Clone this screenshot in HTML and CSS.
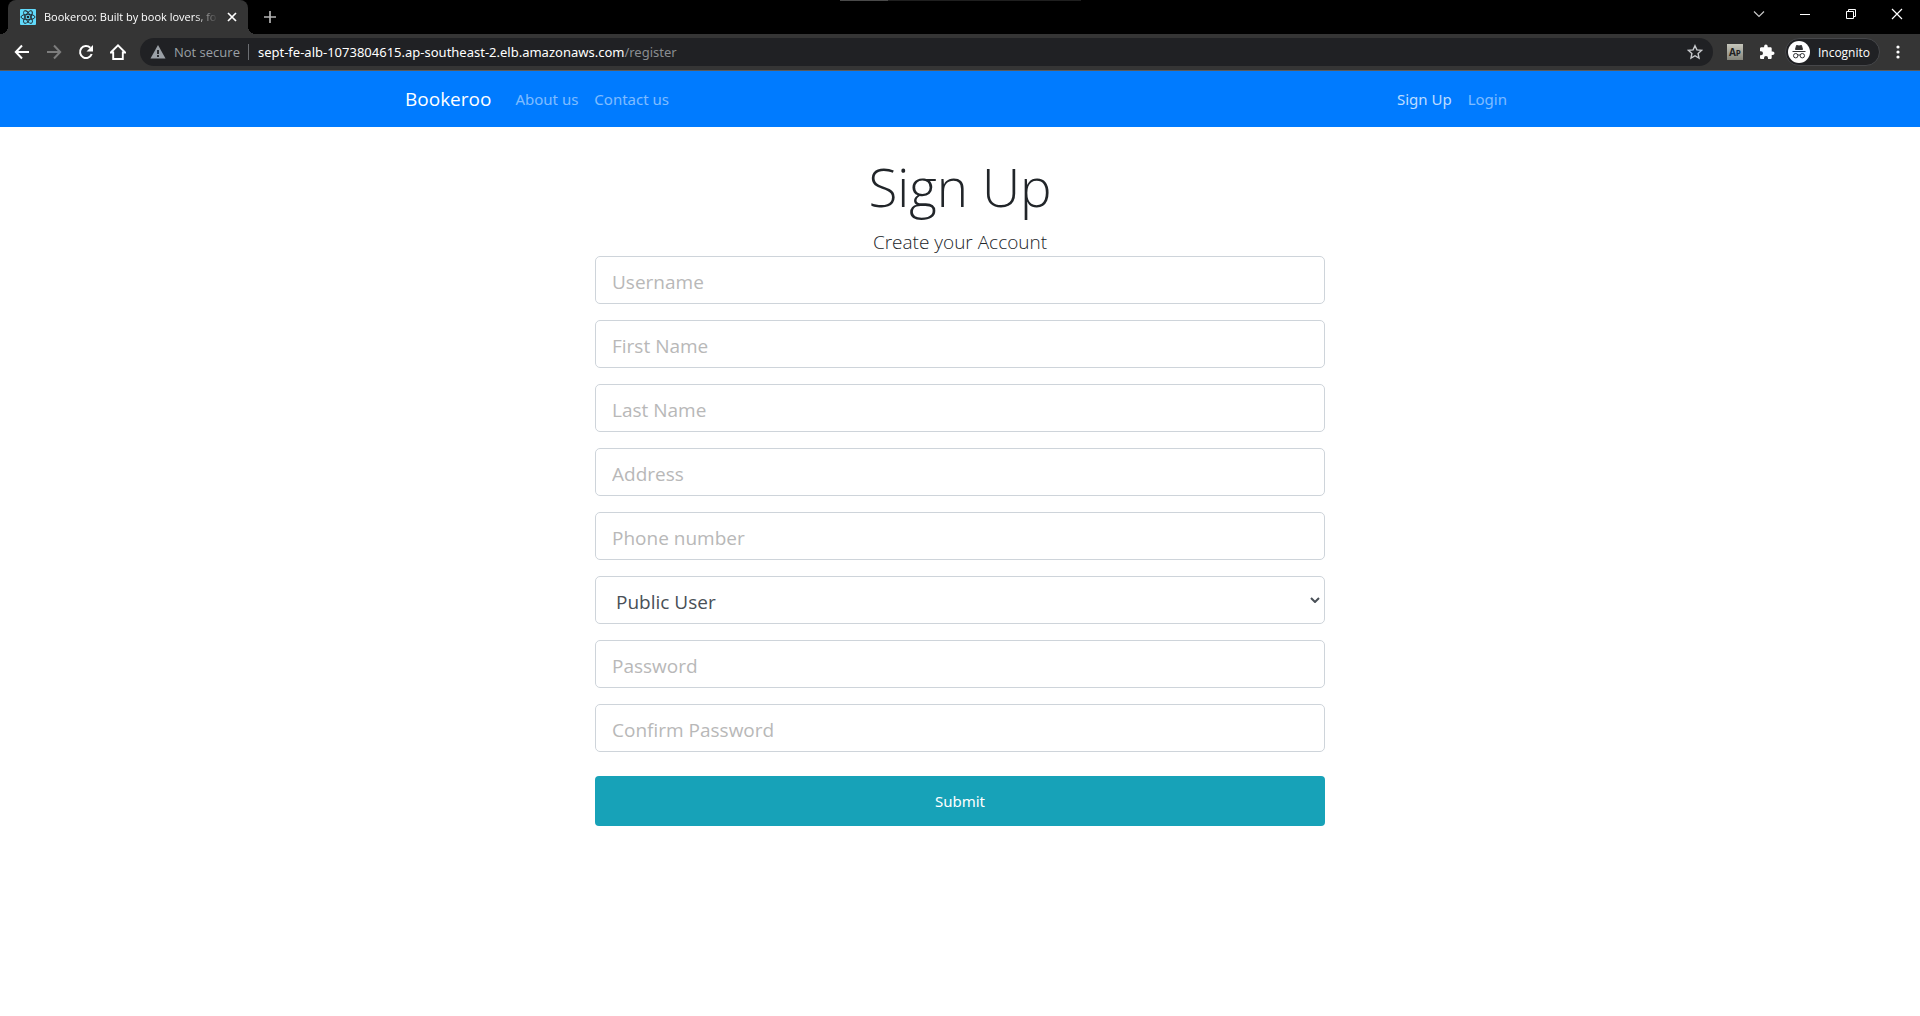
FILE: index.html
```html
<!DOCTYPE html>
<html lang="en">
<head>
<meta charset="utf-8">
<meta name="viewport" content="width=device-width, initial-scale=1">
<title>Bookeroo: Built by book lovers, for book lovers</title>
<link rel="stylesheet" href="styles.css">
</head>
<body>
<div class="browser">
  <div class="tabstrip">
    <div class="tab">
      <svg class="favicon" width="16" height="16" viewBox="0 0 16 16" aria-hidden="true">
        <rect width="16" height="16" rx="1" fill="#61dafb"/>
        <g fill="none" stroke="#20232a" stroke-width="0.9">
          <ellipse cx="8" cy="8" rx="7" ry="2.7"/>
          <ellipse cx="8" cy="8" rx="7" ry="2.7" transform="rotate(60 8 8)"/>
          <ellipse cx="8" cy="8" rx="7" ry="2.7" transform="rotate(120 8 8)"/>
        </g>
        <circle cx="8" cy="8" r="1.3" fill="#20232a"/>
      </svg>
      <span class="tab-title">Bookeroo: Built by book lovers, fo</span>
      <button class="icon-btn" aria-label="Close tab"><svg width="12" height="12" viewBox="0 0 12 12"><path d="M2 2l8 8M10 2l-8 8" stroke="#fff" stroke-width="1.7"/></svg></button>
    </div>
    <button class="icon-btn new-tab" aria-label="New tab"><svg width="12" height="12" viewBox="0 0 12 12"><path d="M6 0v12M0 6h12" stroke="#b4b4b4" stroke-width="1.7"/></svg></button>
    <div class="load-mark"></div>
    <div class="window-controls">
      <button class="icon-btn" aria-label="Search tabs"><svg width="12" height="12" viewBox="0 0 12 12"><path d="M1 3.500l5 5 5-5" fill="none" stroke="#c8c8c8" stroke-width="1.200"/></svg></button>
      <button class="icon-btn" aria-label="Minimize"><svg width="12" height="12" viewBox="0 0 12 12"><path d="M1 6.500h10" stroke="#fff"/></svg></button>
      <button class="icon-btn" aria-label="Restore"><svg width="12" height="12" viewBox="0 0 12 12"><path d="M1.500 3.500h7v7h-7zM3.500 3.500v-2h7v7h-2" fill="none" stroke="#fff"/></svg></button>
      <button class="icon-btn" aria-label="Close"><svg width="12" height="12" viewBox="0 0 12 12"><path d="M1 1l10 10M11 1L1 11" stroke="#fff" stroke-width="1.200"/></svg></button>
    </div>
  </div>
  <div class="toolbar">
    <div class="history">
      <button class="icon-btn" aria-label="Back"><svg width="16" height="16" viewBox="0 0 16 16"><path d="M15 8H2M8 1.500L1.800 8 8 14.500" fill="none" stroke="#fff" stroke-width="2"/></svg></button>
      <button class="icon-btn" aria-label="Forward" disabled><svg width="16" height="16" viewBox="0 0 16 16"><path d="M1 8h13M8 1.500L14.200 8 8 14.500" fill="none" stroke="#7d7d7d" stroke-width="2"/></svg></button>
      <button class="icon-btn" aria-label="Reload"><svg width="16" height="16" viewBox="0 0 16 16"><path d="M13.700 10A6 6 0 1 1 12.300 3.800" fill="none" stroke="#fff" stroke-width="2"/><path d="M15 1v6.500H8.500z" fill="#fff"/></svg></button>
      <button class="icon-btn" aria-label="Home"><svg width="16" height="16" viewBox="0 0 16 16"><path d="M.8 8.500L8 1.400l7.200 7.100H12.800V15H3.200V8.500z" fill="none" stroke="#fff" stroke-width="1.900"/></svg></button>
    </div>
    <div class="omnibox">
      <svg width="16" height="14" viewBox="0 0 16 14" aria-hidden="true"><path d="M8 0l7.500 13.500H.5z" fill="#9aa0a6"/><path d="M8 5v4M8 10v2" stroke="#202124" stroke-width="1.800"/></svg>
      <span class="security">Not secure</span>
      <span class="url"><span class="host">sept-fe-alb-1073804615.ap-southeast-2.elb.amazonaws.com</span>/register</span>
      <button class="icon-btn" aria-label="Bookmark this tab"><svg width="16" height="16" viewBox="0 0 16 16"><path d="M8 1.700l1.900 4.200 4.600.5-3.400 3.100.9 4.500L8 11.700 4 14l.9-4.500-3.400-3.100 4.600-.5z" fill="none" stroke="#c8cacd" stroke-width="1.400"/></svg></button>
    </div>
    <button class="ap-badge" aria-label="AP extension">A<small>P</small></button>
    <button class="icon-btn" aria-label="Extensions"><svg width="16" height="16" viewBox="0 0 16 16"><path d="M13.700 7.400h-1V4.600c0-.8-.6-1.300-1.300-1.300H8.700V2.400a1.800 1.800 0 0 0-3.600 0v.9H2.400C1.600 3.300 1 3.900 1 4.600v2.600h1a2 2 0 0 1 0 4H1v2.600c0 .7.600 1.300 1.400 1.300H5v-1a2 2 0 0 1 4 0v1h2.400c.7 0 1.300-.6 1.300-1.300V11h1a1.800 1.800 0 0 0 0-3.600z" fill="#fff"/></svg></button>
    <button class="incognito"><svg width="22" height="22" viewBox="0 0 22 22" aria-hidden="true"><circle cx="11" cy="11" r="11" fill="#fff"/><path d="M7.500 8.500l1-4 2.500.5 2.500-.5 1 4z" fill="#303134" stroke="#303134"/><path d="M4.500 10.500h13" stroke="#303134"/><circle cx="7.700" cy="14.700" r="2.200" fill="none" stroke="#303134"/><circle cx="14.300" cy="14.700" r="2.200" fill="none" stroke="#303134"/><path d="M9.800 14.200q1.200-.7 2.400 0" fill="none" stroke="#303134"/></svg>Incognito</button>
    <button class="icon-btn" aria-label="Menu"><svg width="16" height="16" viewBox="0 0 16 16"><g fill="#fff"><circle cx="8" cy="3" r="1.600"/><circle cx="8" cy="8" r="1.600"/><circle cx="8" cy="13" r="1.600"/></g></svg></button>
  </div>
</div>

<nav class="navbar">
  <div class="container navbar-row">
    <a class="brand" href="#">Bookeroo</a>
    <a class="nav-link" href="#">About us</a>
    <a class="nav-link" href="#">Contact us</a>
    <span class="spacer"></span>
    <a class="nav-link active" href="#">Sign Up</a>
    <a class="nav-link" href="#">Login</a>
  </div>
</nav>

<main class="container">
  <div class="register">
    <h1 class="title">Sign Up</h1>
    <p class="lead">Create your Account</p>
    <form class="form">
      <input class="field" type="text" placeholder="Username" aria-label="Username">
      <input class="field" type="text" placeholder="First Name" aria-label="First Name">
      <input class="field" type="text" placeholder="Last Name" aria-label="Last Name">
      <input class="field" type="text" placeholder="Address" aria-label="Address">
      <input class="field" type="text" placeholder="Phone number" aria-label="Phone number">
      <div class="select-wrap">
        <select class="field" aria-label="User type"><option>Public User</option></select>
        <svg class="caret" width="10" height="6" viewBox="0 0 10 6" aria-hidden="true"><path d="M1 1l4 4 4-4" fill="none" stroke="#495057" stroke-width="2"/></svg>
      </div>
      <input class="field" type="password" placeholder="Password" aria-label="Password">
      <input class="field" type="password" placeholder="Confirm Password" aria-label="Confirm Password">
      <button class="submit" type="button">Submit</button>
    </form>
  </div>
</main>
</body>
</html>
```
FILE: styles.css
```css
* { box-sizing: border-box; }

body {
  margin: 0;
  background: #fff;
  color: #212529;
  font-family: "Open Sans", "Noto Sans", sans-serif;
  font-size: 15px;
  line-height: 24px;
}

button, input, select { font-family: inherit; }
a { text-decoration: none; }

/* Browser frame */
.browser { font-size: 12px; line-height: 16px; color: #fff; }

.icon-btn {
  display: flex;
  flex: none;
  padding: 0;
  border: 0;
  background: none;
}

.tabstrip {
  position: relative;
  display: flex;
  height: 34px;
  padding-left: 8px;
  background: #000;
}

.tab {
  position: relative;
  display: flex;
  align-items: center;
  gap: 8px;
  width: 240px;
  padding: 0 10px 0 12px;
  border-radius: 8px 8px 0 0;
  background: #353535;
}

.tab::before,
.tab::after {
  content: "";
  position: absolute;
  bottom: 0;
  width: 8px;
  height: 8px;
}
.tab::before { left: -8px; background: radial-gradient(circle at 0 0, #000 8px, #353535 8px); }
.tab::after { right: -8px; background: radial-gradient(circle at 100% 0, #000 8px, #353535 8px); }

.favicon { flex: none; }

.tab-title {
  flex: 1;
  white-space: nowrap;
  font-size: 11px;
  -webkit-mask-image: linear-gradient(to left, transparent, #000 24px);
  mask-image: linear-gradient(to left, transparent, #000 24px);
}

.new-tab { align-self: center; margin-left: 16px; }

.load-mark {
  position: absolute;
  top: 0;
  left: 840px;
  width: 241px;
  height: 1px;
  background: linear-gradient(to right, #4a4a4a 20%, #1f1f1f 20%);
}

.window-controls {
  display: flex;
  gap: 34px;
  margin-left: auto;
  padding: 8px 17px 0 0;
}

.toolbar {
  display: flex;
  align-items: center;
  gap: 10px;
  height: 37px;
  padding: 0 14px;
  border-bottom: 1px solid #5a5a5a;
  background: #353535;
}

.history { display: flex; gap: 16px; }

.omnibox {
  display: flex;
  flex: 1;
  align-items: center;
  height: 28px;
  margin: 0 4px;
  padding: 0 10px;
  border-radius: 14px;
  background: #202124;
  font-size: 13px;
  white-space: nowrap;
}

.security {
  margin: 0 9px 0 8px;
  padding-right: 8px;
  border-right: 1px solid #6b6e72;
  color: #9aa0a6;
}

.url {
  flex: 1;
  color: #8a8d91;
  font-family: "Noto Sans", sans-serif;
}
.host { color: #fff; }

.ap-badge {
  width: 16px;
  height: 16px;
  margin-right: 6px;
  padding: 0;
  border: 0;
  background: linear-gradient(#c6c6bb, #85857b);
  color: #222;
  font-size: 10px;
  font-weight: 700;
  line-height: 14px;
}
.ap-badge small { font-size: 8px; }

.incognito {
  display: flex;
  align-items: center;
  gap: 8px;
  height: 28px;
  padding: 0 9px 0 2px;
  border: 1px solid #46474a;
  border-radius: 14px;
  background: #202124;
  color: #fff;
  font-size: 12px;
}

/* Site */
.container {
  width: 100%;
  max-width: 1140px;
  margin: 0 auto;
  padding: 0 15px;
}

.navbar { background: #007bff; }

.navbar-row {
  display: flex;
  align-items: center;
  min-height: 56px;
}

.brand {
  margin-right: 16px;
  color: #fff;
  font-size: 19px;
  line-height: 30px;
}

.nav-link {
  padding: 8px;
  color: rgba(255, 255, 255, 0.5);
  font-family: "Noto Sans", sans-serif;
}
.nav-link.active { color: rgba(255, 255, 255, 0.75); }
.spacer { flex: 1; }

.register {
  max-width: 730px;
  margin: 0 auto;
  padding-top: 26px;
}

.title,
.lead {
  margin: 0;
  font-weight: 300;
  text-align: center;
}
.title { padding-bottom: 8px; font-size: 53px; line-height: 67px; }
.lead { font-size: 19px; line-height: 28px; }

.form {
  display: flex;
  flex-direction: column;
  gap: 16px;
}

.field {
  width: 100%;
  height: 48px;
  padding: 12px 16px 8px;
  border: 1px solid #ced4da;
  border-radius: 5px;
  background: #fff;
  color: #495057;
  font-size: 19px;
}
.field::placeholder { color: #b8b8b8; opacity: 1; }

.select-wrap { position: relative; }
select.field {
  display: block;
  padding-left: 20px;
  appearance: none;
}
.caret {
  position: absolute;
  top: 21px;
  right: 5px;
  pointer-events: none;
}

.submit {
  height: 50px;
  margin-top: 8px;
  border: 0;
  border-radius: 4px;
  background: #17a2b8;
  color: #fff;
  font-family: "Noto Sans", sans-serif;
  font-size: 15px;
}
```
